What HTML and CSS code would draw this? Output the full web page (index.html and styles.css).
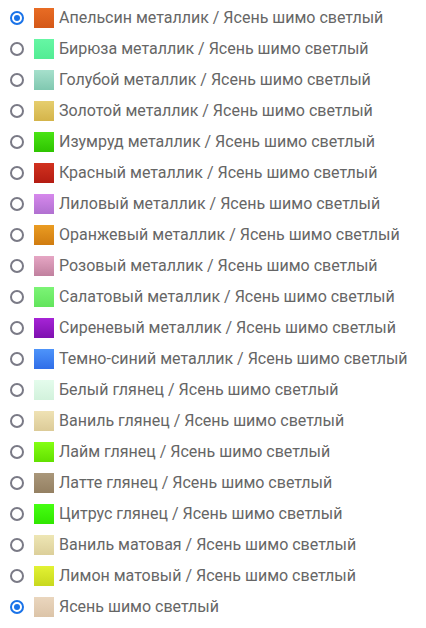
FILE: index.html
```html
<!DOCTYPE html>
<html lang="ru">
<head>
<meta charset="utf-8">
<link rel="stylesheet" href="styles.css">
</head>
<body>
<ul class="options">
  <li class="opt"><span class="radio checked"></span><span class="sw sw-1"></span><span class="label">Апельсин металлик / Ясень шимо светлый</span></li>
  <li class="opt"><span class="radio"></span><span class="sw sw-2"></span><span class="label">Бирюза металлик / Ясень шимо светлый</span></li>
  <li class="opt"><span class="radio"></span><span class="sw sw-3"></span><span class="label">Голубой металлик / Ясень шимо светлый</span></li>
  <li class="opt"><span class="radio"></span><span class="sw sw-4"></span><span class="label">Золотой металлик / Ясень шимо светлый</span></li>
  <li class="opt"><span class="radio"></span><span class="sw sw-5"></span><span class="label">Изумруд металлик / Ясень шимо светлый</span></li>
  <li class="opt"><span class="radio"></span><span class="sw sw-6"></span><span class="label">Красный металлик / Ясень шимо светлый</span></li>
  <li class="opt"><span class="radio"></span><span class="sw sw-7"></span><span class="label">Лиловый металлик / Ясень шимо светлый</span></li>
  <li class="opt"><span class="radio"></span><span class="sw sw-8"></span><span class="label">Оранжевый металлик / Ясень шимо светлый</span></li>
  <li class="opt"><span class="radio"></span><span class="sw sw-9"></span><span class="label">Розовый металлик / Ясень шимо светлый</span></li>
  <li class="opt"><span class="radio"></span><span class="sw sw-10"></span><span class="label">Салатовый металлик / Ясень шимо светлый</span></li>
  <li class="opt"><span class="radio"></span><span class="sw sw-11"></span><span class="label">Сиреневый металлик / Ясень шимо светлый</span></li>
  <li class="opt"><span class="radio"></span><span class="sw sw-12"></span><span class="label">Темно-синий металлик / Ясень шимо светлый</span></li>
  <li class="opt"><span class="radio"></span><span class="sw sw-13"></span><span class="label">Белый глянец / Ясень шимо светлый</span></li>
  <li class="opt"><span class="radio"></span><span class="sw sw-14"></span><span class="label">Ваниль глянец / Ясень шимо светлый</span></li>
  <li class="opt"><span class="radio"></span><span class="sw sw-15"></span><span class="label">Лайм глянец / Ясень шимо светлый</span></li>
  <li class="opt"><span class="radio"></span><span class="sw sw-16"></span><span class="label">Латте глянец / Ясень шимо светлый</span></li>
  <li class="opt"><span class="radio"></span><span class="sw sw-17"></span><span class="label">Цитрус глянец / Ясень шимо светлый</span></li>
  <li class="opt"><span class="radio"></span><span class="sw sw-18"></span><span class="label">Ваниль матовая / Ясень шимо светлый</span></li>
  <li class="opt"><span class="radio"></span><span class="sw sw-19"></span><span class="label">Лимон матовый / Ясень шимо светлый</span></li>
  <li class="opt"><span class="radio checked"></span><span class="sw sw-20"></span><span class="label">Ясень шимо светлый</span></li>
</ul>
</body>
</html>
```
FILE: styles.css
```css
html, body {
  margin: 0;
  padding: 0;
  background: #ffffff;
}
body {
  font-family: Roboto, "Liberation Sans", sans-serif;
  font-size: 16px;
  color: #666666;
}
.options {
  list-style: none;
  margin: 0;
  padding: 2px 0 0 10px;
}
.opt {
  display: flex;
  align-items: center;
  height: 31px;
}
.radio {
  box-sizing: border-box;
  width: 14px;
  height: 14px;
  border: 2px solid #7a7a86;
  border-radius: 50%;
  flex: none;
  margin-right: 10px;
  display: flex;
  align-items: center;
  justify-content: center;
}
.radio.checked {
  border-color: #1a73e8;
}
.radio.checked::after {
  content: "";
  width: 6px;
  height: 6px;
  border-radius: 50%;
  background: #1a73e8;
}
.sw {
  width: 20px;
  height: 20px;
  flex: none;
  margin-right: 5px;
}
.label {
  white-space: nowrap;
}
.sw-1 { background: linear-gradient(#e86c24, #d45818); }
.sw-2 { background: linear-gradient(#66f6a4, #52ec94); }
.sw-3 { background: linear-gradient(#a6e0cc, #80c8b0); }
.sw-4 { background: linear-gradient(#e6ce6e, #d4b44a); }
.sw-5 { background: linear-gradient(#4ae414, #2ec400); }
.sw-6 { background: linear-gradient(#d2321f, #b41c12); }
.sw-7 { background: linear-gradient(#d688ec, #b070d0); }
.sw-8 { background: linear-gradient(#ea9c22, #d07c10); }
.sw-9 { background: linear-gradient(#e6a6c4, #c0809e); }
.sw-10 { background: linear-gradient(#7cf476, #62e45c); }
.sw-11 { background: linear-gradient(#a624d6, #7e10b0); }
.sw-12 { background: linear-gradient(#4e94fa, #306ee8); }
.sw-13 { background: linear-gradient(#e4fcec, #d2f2dc); }
.sw-14 { background: linear-gradient(#efe2b4, #dccb98); }
.sw-15 { background: linear-gradient(#84ff12, #62e000); }
.sw-16 { background: linear-gradient(#aa977a, #948062); }
.sw-17 { background: linear-gradient(#46ff12, #30e600); }
.sw-18 { background: linear-gradient(#eee6b4, #dccf9a); }
.sw-19 { background: linear-gradient(#e2f234, #c8d81e); }
.sw-20 { background: linear-gradient(#ead6be, #dcc4a8); }
```
